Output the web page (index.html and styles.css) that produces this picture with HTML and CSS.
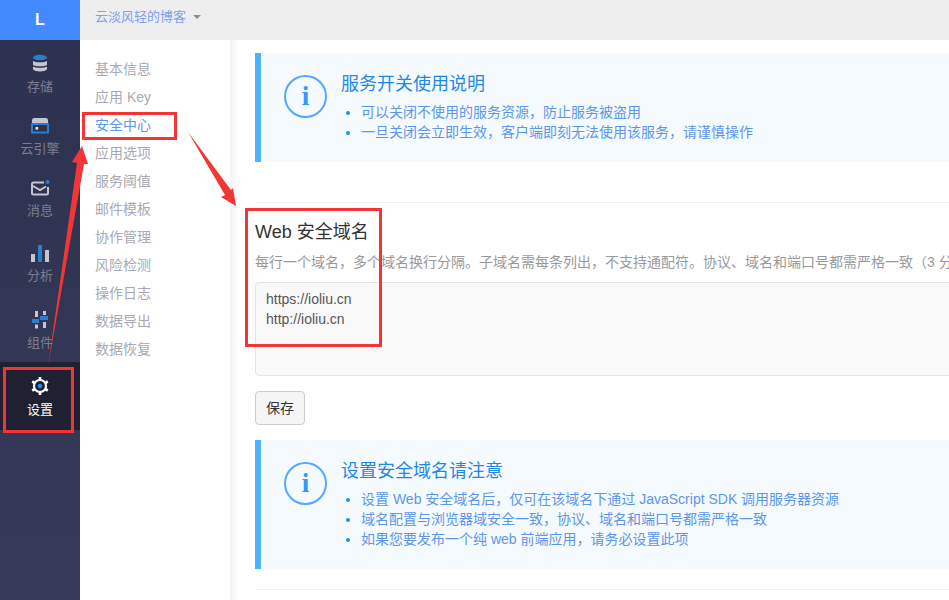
FILE: index.html
```html
<!DOCTYPE html>
<html lang="zh-CN">
<head>
<meta charset="utf-8">
<title>Web 安全域名</title>
<link rel="stylesheet" href="styles.css">
</head>
<body>
<div class="app">
  <aside class="rail">
    <div class="logo">L</div>
    <div class="rail-item h62">
      <svg class="rail-icon" viewBox="0 0 20 20"><path class="g" d="M3 7c2 1.700 12 1.700 14 0v4c-2 1.800-12 1.800-14 0zM3 12.500c2 1.700 12 1.700 14 0V15.500c-2 2.600-12 2.600-14 0z"/><ellipse class="b" cx="10" cy="3.500" rx="7" ry="2.800"/></svg>
      <span>存储</span>
    </div>
    <div class="rail-item h62">
      <svg class="rail-icon" viewBox="0 0 20 20"><path class="g" d="M2 7V4.500Q2 2 4.500 2h11Q18 2 18 4.500V7z"/><rect class="b" x="1" y="7" width="18" height="10.500" rx="1"/><rect class="d" x="3" y="9" width="14" height="6.500"/><rect class="w" x="5.500" y="11" width="2.600" height="2.600"/></svg>
      <span>云引擎</span>
    </div>
    <div class="rail-item h65">
      <svg class="rail-icon" viewBox="0 0 20 20"><path class="ls" d="M14 4.500H3.500Q2 4.500 2 6v9q0 1.500 1.500 1.500h13q1.500 0 1.500-1.500V9"/><path class="ls" d="M3 8l7 4 6-3.500"/><circle class="b" cx="17.500" cy="4" r="2"/></svg>
      <span>消息</span>
    </div>
    <div class="rail-item h67">
      <svg class="rail-icon" viewBox="0 0 20 20"><rect class="g" x="1" y="11" width="4" height="8"/><rect class="b" x="8" y="2" width="4" height="17"/><rect class="g" x="15" y="7" width="4" height="12"/></svg>
      <span>分析</span>
    </div>
    <div class="rail-item h66">
      <svg class="rail-icon" viewBox="0 0 20 20"><rect class="g" x="5" y="1" width="3" height="6"/><rect class="b" x="2" y="9" width="7" height="4"/><rect class="g" x="5" y="14.500" width="3" height="4"/><rect class="g" x="13" y="1" width="3" height="4"/><rect class="b" x="10" y="6" width="8" height="4"/><rect class="g" x="13" y="12" width="3" height="6"/></svg>
      <span>组件</span>
    </div>
    <div class="rail-item h68 active">
      <svg class="rail-icon" viewBox="0 0 20 20"><path class="ts" d="M10 1v3M10 16v3M2.200 5.500l2.600 1.500M15.200 13l2.600 1.500M2.200 14.500l2.600-1.500M15.200 7l2.600-1.500"/><circle class="ws" cx="10" cy="10" r="6"/><circle class="ab" cx="10" cy="10" r="2.200"/></svg>
      <span>设置</span>
    </div>
  </aside>
  <div class="body-col">
    <header class="topbar">
      <span class="app-name">云淡风轻的博客</span>
      <span class="caret"></span>
    </header>
    <div class="panes">
      <nav class="subnav">
        <a>基本信息</a>
        <a>应用 Key</a>
        <a class="current">安全中心</a>
        <a>应用选项</a>
        <a>服务阈值</a>
        <a>邮件模板</a>
        <a>协作管理</a>
        <a>风险检测</a>
        <a>操作日志</a>
        <a>数据导出</a>
        <a>数据恢复</a>
      </nav>
      <div class="strip"></div>
      <main class="content">
        <section class="callout">
          <div class="info-icon"><span>i</span></div>
          <div class="callout-text">
            <h3>服务开关使用说明</h3>
            <ul>
              <li>可以关闭不使用的服务资源&#xFF0C;防止服务被盗用</li>
              <li>一旦关闭会立即生效&#xFF0C;客户端即刻无法使用该服务&#xFF0C;请谨慎操作</li>
            </ul>
          </div>
        </section>
        <hr class="rule first">
        <h2 class="sec-title">Web 安全域名</h2>
        <p class="desc">每行一个域名&#xFF0C;多个域名换行分隔。子域名需每条列出&#xFF0C;不支持通配符。协议、域名和端口号都需严格一致&#xFF08;3 分钟内生效&#xFF09;。</p>
        <div class="domains">
          <div>https://ioliu.cn</div>
          <div>http://ioliu.cn</div>
        </div>
        <button class="save" type="button">保存</button>
        <section class="callout second">
          <div class="info-icon"><span>i</span></div>
          <div class="callout-text">
            <h3>设置安全域名请注意</h3>
            <ul>
              <li>设置 Web 安全域名后&#xFF0C;仅可在该域名下通过 JavaScript SDK 调用服务器资源</li>
              <li>域名配置与浏览器域安全一致&#xFF0C;协议、域名和端口号都需严格一致</li>
              <li>如果您要发布一个纯 web 前端应用&#xFF0C;请务必设置此项</li>
            </ul>
          </div>
        </section>
        <hr class="rule last">
      </main>
    </div>
  </div>
</div>
<div class="mark mark-nav"></div>
<div class="mark mark-settings"></div>
<div class="mark mark-domain"></div>
<svg class="arrows" width="949" height="600" viewBox="0 0 949 600">
  <polygon points="48,366 77,163 72,162 82,146 88,164 84,164"/>
  <polygon points="188,132 231,190 233,188 236,206 221,197 225,195"/>
</svg>
</body>
</html>
```

FILE: styles.css
```css
* { box-sizing: border-box; }
html, body { margin: 0; height: 100%; overflow: hidden; background: #fff; }
body { font: 14px/20px "Liberation Sans", "Noto Sans CJK SC", sans-serif; color: #333; }
.app { display: flex; height: 600px; width: 949px; overflow: hidden; }

.rail { flex: 0 0 80px; background: linear-gradient(#2d3150, #373b59); color: #7b7e90; }
.logo { height: 40px; background: #448aff; color: #fff; font-weight: 700; font-size: 16px; display: flex; align-items: center; justify-content: center; }
.rail-item { display: flex; flex-direction: column; align-items: center; padding-top: 14px; font-size: 13px; line-height: 18px; }
.rail-item span { margin-top: 4px; }
.rail-item.active span { margin-top: 5px; }
.h62 { height: 62px; }
.h65 { height: 65px; }
.h66 { height: 66px; }
.h67 { height: 67px; }
.h68 { height: 68px; }
.rail-icon { width: 20px; height: 20px; display: block; flex: none; }
.rail-item.active { background: #1f2133; color: #fff; }
.g { fill: #c5c6cf; }
.b { fill: #2a7fd0; }
.d { fill: #2f3350; }
.w { fill: #e8e8ee; }
.ls { fill: none; stroke: #c5c6cf; stroke-width: 2; }
.ws { fill: none; stroke: #fff; stroke-width: 2.200; }
.ts { fill: none; stroke: #fff; stroke-width: 2.600; }
.ab { fill: #1e90ff; }

.body-col { flex: 1; display: flex; flex-direction: column; min-width: 0; }
.topbar { flex: 0 0 40px; background: #eee; display: flex; align-items: center; padding: 0 0 6px 15px; font-size: 13px; }
.app-name { color: #7f9ff0; }
.caret { width: 0; height: 0; margin-left: 7px; border: 4px solid transparent; border-top-color: #8c8c96; border-bottom: 0; }

.panes { flex: 1; display: flex; min-height: 0; }
.subnav { flex: 0 0 150px; padding: 15px 0 0 15px; background: #fff; }
.subnav a { display: block; height: 28px; line-height: 28px; color: #a9a9b2; }
.subnav a.current { color: #5a96f5; }
.strip { flex: 0 0 10px; background: linear-gradient(90deg, #f3f3f4, #fff); }
.content { flex: 1; min-width: 0; padding: 13px 0 0 15px; }

.callout { display: flex; width: 800px; padding: 20px 0 20px 23px; background: #f5faff; border-left: 6px solid #4db3ff; }
.callout.second { margin-top: 15px; }
.info-icon { flex: none; width: 43px; height: 43px; margin: 2px 14px 0 0; border: 2px solid #55a8ff; border-radius: 50%; display: flex; align-items: center; justify-content: center; }
.info-icon span { font: 700 27px/1 "Liberation Serif", serif; color: #2f9bf7; }
.callout h3 { margin: 0 0 7px; font-size: 18px; font-weight: 400; line-height: 22px; color: #1f87e8; white-space: nowrap; }
.callout ul { margin: 0; padding: 0 0 0 20px; color: #5c96ea; }
.callout li { height: 20px; white-space: nowrap; }
.callout li::marker { color: #1e90ee; }

.rule { height: 1px; margin: 0; border: 0; background: #eee; width: 800px; }
.rule.first { margin-top: 40px; }
.rule.last { margin-top: 20px; }
.sec-title { margin: 16px 0 0; font-size: 18px; font-weight: 400; line-height: 26px; color: #333; white-space: nowrap; }
.desc { margin: 7px 0 0; color: #999; white-space: nowrap; }
.domains { width: 800px; height: 94px; margin-top: 10px; padding: 6px 10px; background: #f9f9f9; border: 1px solid #e5e5e5; border-radius: 4px; color: #555; }
.save { display: block; width: 50px; height: 34px; margin-top: 15px; padding: 0; background: #f5f5f5; border: 1px solid #ccc; border-radius: 4px; font: inherit; color: #333; }

.mark { position: absolute; border: 3px solid #f33535; }
.mark-nav { left: 82px; top: 112px; width: 95px; height: 28px; }
.mark-settings { left: 3px; top: 367px; width: 71px; height: 66px; }
.mark-domain { left: 245px; top: 208px; width: 137px; height: 139px; }
.arrows { position: absolute; left: 0; top: 0; pointer-events: none; }
.arrows polygon { fill: #f33535; }
```
